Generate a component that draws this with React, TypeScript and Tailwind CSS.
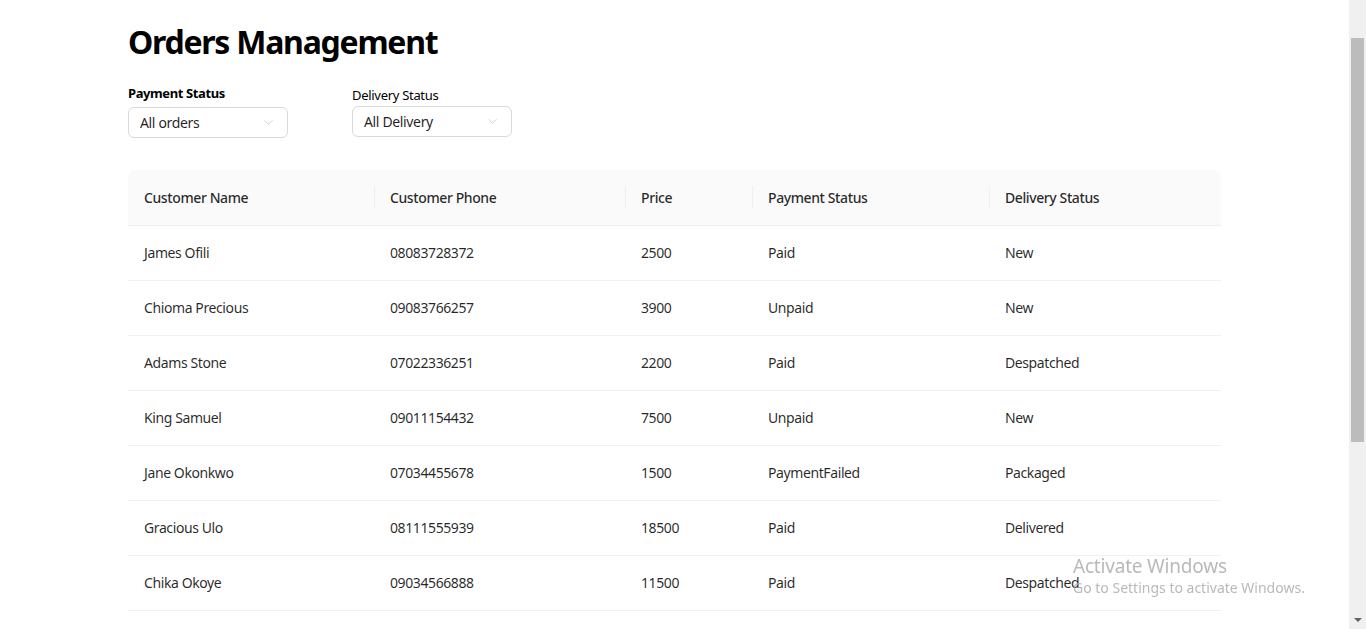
import { ChevronDown } from "lucide-react"

type Order = {
  name: string
  phone: string
  price: number
  payment: string
  delivery: string
}

const orders: Order[] = [
  { name: "James Ofili", phone: "08083728372", price: 2500, payment: "Paid", delivery: "New" },
  { name: "Chioma Precious", phone: "09083766257", price: 3900, payment: "Unpaid", delivery: "New" },
  { name: "Adams Stone", phone: "07022336251", price: 2200, payment: "Paid", delivery: "Despatched" },
  { name: "King Samuel", phone: "09011154432", price: 7500, payment: "Unpaid", delivery: "New" },
  { name: "Jane Okonkwo", phone: "07034455678", price: 1500, payment: "PaymentFailed", delivery: "Packaged" },
  { name: "Gracious Ulo", phone: "08111555939", price: 18500, payment: "Paid", delivery: "Delivered" },
  { name: "Chika Okoye", phone: "09034566888", price: 11500, payment: "Paid", delivery: "Despatched" }
]

const columns = [
  { title: "Customer Name", width: "w-[246px]" },
  { title: "Customer Phone", width: "w-[251px]" },
  { title: "Price", width: "w-[127px]" },
  { title: "Payment Status", width: "w-[237px]" },
  { title: "Delivery Status", width: "" }
]

function Select({ label, value, bold }: { label: string; value: string; bold?: boolean }) {
  return (
    <div className={bold ? "flex flex-col gap-[5px]" : "flex flex-col gap-[2px] pt-[2px]"}>
      <label
        className={
          bold
            ? "text-[13px] font-bold leading-[18px] tracking-[-0.4px] text-black"
            : "text-[13px] leading-[18px] tracking-[-0.3px] text-black"
        }
      >
        {label}
      </label>
      <button
        type="button"
        className="flex h-[31px] w-[160px] items-center justify-between rounded-[6px] border border-[#d9d9d9] bg-white pl-[11px] pr-[11px] text-[14px] tracking-[-0.35px] text-[rgba(0,0,0,0.88)]"
      >
        <span>{value}</span>
        <ChevronDown size={15} strokeWidth={1.1} className="text-[#bfbfbf]" />
      </button>
    </div>
  )
}

function Scrollbar() {
  return (
    <aside className="flex w-[17px] shrink-0 flex-col bg-[#f0f0f0]">
      <div className="h-[38px]" />
      <div className="mx-[2px] h-[404px] bg-[#bcbcbc]" />
      <div className="flex flex-1 items-end justify-center pb-[7px]">
        <span className="h-0 w-0 border-x-[4px] border-t-[4px] border-x-transparent border-t-[#606060]" />
      </div>
    </aside>
  )
}

export default function App() {
  return (
    <div className="flex h-screen overflow-hidden bg-white font-['Noto_Sans',sans-serif] text-[rgba(0,0,0,0.85)]">
      <div className="flex-1 overflow-hidden">
        <main className="mx-auto w-[1093px] pb-[290px] pt-[20px]">
          <h1 className="text-[32px] font-bold leading-[44px] tracking-[-1.25px] text-black">Orders Management</h1>
          <section className="mt-[20px] flex items-start gap-[64px]">
            <Select label="Payment Status" value="All orders" bold />
            <Select label="Delivery Status" value="All Delivery" />
          </section>
          <table className="mt-[32px] w-full table-fixed border-collapse text-left text-[14px] tracking-[-0.4px]">
            <thead>
              <tr className="bg-[#fafafa]">
                {columns.map((col, i) => (
                  <th
                    key={col.title}
                    className={`relative h-[55px] border-b border-[#f0f0f0] px-[16px] font-medium ${col.width} ${
                      i === 0 ? "rounded-tl-[8px]" : ""
                    } ${i === columns.length - 1 ? "rounded-tr-[8px]" : ""}`}
                  >
                    {i > 0 && <span className="absolute left-0 top-1/2 h-[22px] w-px -translate-y-1/2 bg-[#f0f0f0]" />}
                    {col.title}
                  </th>
                ))}
              </tr>
            </thead>
            <tbody>
              {orders.map((o) => (
                <tr key={o.phone} className="border-b border-[#f0f0f0]">
                  <td className="h-[55px] px-[16px]">{o.name}</td>
                  <td className="px-[16px]">{o.phone}</td>
                  <td className="px-[16px]">{o.price}</td>
                  <td className="px-[16px]">{o.payment}</td>
                  <td className="px-[16px]">{o.delivery}</td>
                </tr>
              ))}
            </tbody>
          </table>
        </main>
      </div>
      <Scrollbar />
      <div className="pointer-events-none fixed left-[1073px] top-[554px] text-[#a8a8a8]/80">
        <div className="text-[19px] leading-[24px] tracking-[-0.2px]">Activate Windows</div>
        <div className="text-[14px] leading-[20px]">Go to Settings to activate Windows.</div>
      </div>
    </div>
  )
}
